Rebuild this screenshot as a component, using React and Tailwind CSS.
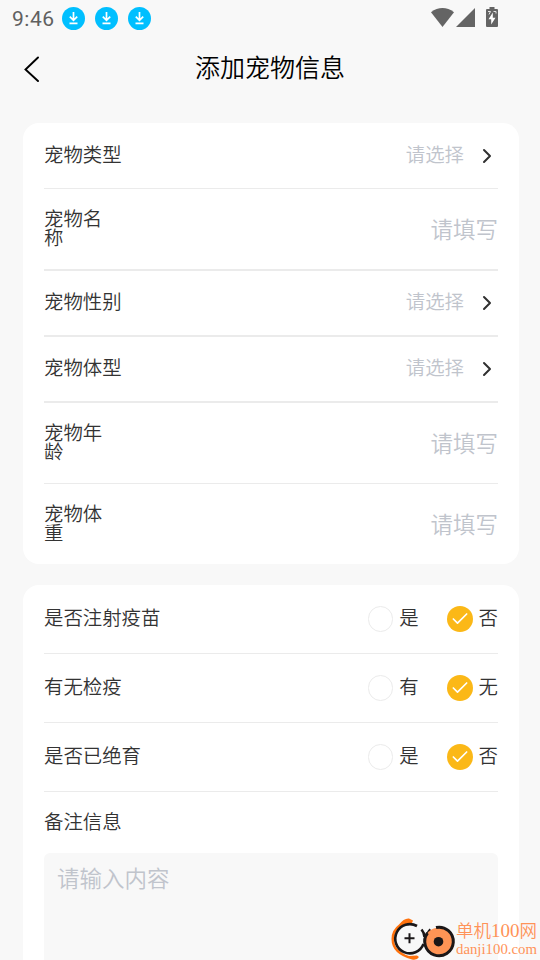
import { Check } from "lucide-react";

const petFields = [
  { label: "宠物类型", type: "select", size: "h-[66px] border-b" },
  { label: "宠物名称", type: "input", size: "h-[82px] border-b-2" },
  { label: "宠物性别", type: "select", size: "h-[66px] border-b-2" },
  { label: "宠物体型", type: "select", size: "h-[66px] border-b-2" },
  { label: "宠物年龄", type: "input", size: "h-[81px] border-b" },
  { label: "宠物体重", type: "input", size: "h-[80px]" },
];

const questions = [
  { label: "是否注射疫苗", yes: "是", no: "否" },
  { label: "有无检疫", yes: "有", no: "无" },
  { label: "是否已绝育", yes: "是", no: "否" },
];

function DownloadBadge() {
  return (
    <svg className="size-[23px]" viewBox="0 0 23 23" fill="none">
      <circle cx="11.5" cy="11.5" r="11.5" fill="#00bfff" />
      <path d="M11.5 5v8M7.8 9.7l3.7 3.7 3.7-3.7M7.5 16.4h8" stroke="#fff" strokeWidth="1.7" />
    </svg>
  );
}

function StatusBar() {
  return (
    <div className="flex h-9 items-center pl-3 pr-[42px]">
      <span className="w-[50px] pt-0.5 font-['Roboto',sans-serif] text-[21px] leading-none font-normal tracking-[0.5px] text-[#606060]">
        9:46
      </span>
      <div className="flex gap-[10px]">
        <DownloadBadge />
        <DownloadBadge />
        <DownloadBadge />
      </div>
      <svg className="ml-auto h-[22px] w-[67px]" viewBox="431 7 67 22" fill="#646464">
        <path d="M431 12.2C438.2 6.6 446.8 6.6 454 12.2L442.5 27z" />
        <path d="M475 8v19h-19z" />
        <path d="M489.5 7h5v2h2.5q1 0 1 1v16q0 1-1 1h-10q-1 0-1-1V10q0-1 1-1h2.5z" />
        <path d="M492.8 12.5l-4.3 6.7h2.7v5.3l4.3-6.8h-2.7z" fill="#fff" />
        <path d="M488 11.5h2.5l-1.5 3M493.5 11.5h2.5v2" stroke="#e4e4e4" strokeWidth="1" fill="none" />
      </svg>
    </div>
  );
}

function PetField({ label, type, size }) {
  return (
    <div className={`flex items-center justify-between border-[#ebebeb] ${size}`}>
      <span
        className={
          type === "input"
            ? "w-[62px] pb-1 leading-[19px] text-[#333]"
            : "pb-[5px] leading-[19px] text-[#333]"
        }
      >
        {label}
      </span>
      {type === "select" ? (
        <div className="flex items-center pr-[6px] pb-0.5 text-[#c0c4cc]">
          <span className="pb-[3px] leading-[19px]">请选择</span>
          <svg className="ml-[18px] mt-0.5 h-4 w-[10px]" viewBox="0 0 10 16" fill="none">
            <path d="M2 2l6 6-6 6" stroke="#303030" strokeWidth="2" strokeLinecap="round" strokeLinejoin="round" />
          </svg>
        </div>
      ) : (
        <span className="pb-[3px] text-[22.5px] leading-6 text-[#c0c4cc]">请填写</span>
      )}
    </div>
  );
}

function Question({ label, yes, no }) {
  return (
    <div className="flex h-[69px] items-center border-b border-[#ebebeb] text-[#333]">
      <span className="pb-[5px] leading-5">{label}</span>
      <div className="ml-auto flex items-center">
        <span className="h-[26px] w-[25px] rounded-full border-[1.5px] border-[#ebebeb]" />
        <span className="ml-[6px] pb-[5px] leading-5">{yes}</span>
        <span className="ml-7 flex size-[26px] items-center justify-center rounded-full bg-[#fbb817] text-white">
          <Check className="size-[20px]" strokeWidth={2} />
        </span>
        <span className="ml-[6px] pb-[5px] leading-5">{no}</span>
      </div>
    </div>
  );
}

function Watermark() {
  return (
    <div className="absolute bottom-0 right-[2px] flex h-[43px] items-center font-normal text-[#ff9358]">
      <svg className="h-[43px] w-[65px]" viewBox="0 0 65 43" fill="none">
        <path d="M8 7.5Q13 1 18 1.5l4 2-1 2.5-6 1Q3 12 3 22q0 12 15 17l8-.5 2 1.5q-2 3.5-7 2.5Q.5 37 .5 22 .5 13 8 7.5z" fill="#ff720d" />
        <path d="M26 9A14.6 14.6 0 1 0 32.500 27" stroke="#1b1718" strokeWidth="2.6" />
        <path d="M30.5 12.5Q33.500 16 33.500 20M36 20Q36 16 39.500 12.500" stroke="#1b1718" strokeWidth="2.6" />
        <circle cx="47.5" cy="24.7" r="14" fill="#ff9455" />
        <path d="M45 10.500A14.300 14.300 0 1 1 36.500 16" stroke="#1b1718" strokeWidth="3" />
        <circle cx="47.500" cy="24.700" r="4.800" fill="#1b1718" />
        <path d="M18.5 16.3v10m-5-5h10" stroke="#1b1718" strokeWidth="2" />
      </svg>
      <div className="w-[82px] whitespace-nowrap">
        <div className="text-[17.5px] leading-[21px] font-[350]">
          单机<span className="font-['Liberation_Serif',serif] text-[19px]">100</span>网
        </div>
        <div className="font-['Liberation_Serif',serif] text-[14.8px] leading-[17px]">danji100.com</div>
      </div>
    </div>
  );
}

export default function App() {
  return (
    <div className="relative h-[960px] w-[540px] overflow-hidden bg-[#f8f8f8] font-['Noto_Sans_CJK_SC',sans-serif] text-[19.4px] font-[350]">
      <StatusBar />

      {/* Page header */}
      <header className="grid h-[66px] grid-cols-[60px_1fr_60px] items-center">
        <button className="pl-6">
          <svg className="h-[26px] w-4" viewBox="0 0 16 26" fill="none">
            <path d="M14 1.5L1.5 13.5 14 25" stroke="#000" strokeWidth="1.9" strokeLinecap="round" />
          </svg>
        </button>
        <h1 className="pb-[7px] text-center text-[25px] leading-8 font-[350] text-black">添加宠物信息</h1>
      </header>

      <main className="flex flex-col gap-[21px] pl-[23px] pr-[21px] pt-[21px]">
        <section className="rounded-2xl bg-white px-[21px]">
          {petFields.map((field) => (
            <PetField key={field.label} {...field} />
          ))}
        </section>

        <section className="rounded-2xl bg-white px-[21px]">
          {questions.map((question) => (
            <Question key={question.label} {...question} />
          ))}
          <div className="flex h-[61px] items-center pb-[3px] text-[#333]">备注信息</div>
          <div className="h-[180px] rounded-md bg-[#f8f8f8] px-[13px] pt-2 text-[22.5px] leading-8 text-[#c0c4cc]">
            请输入内容
          </div>
        </section>
      </main>

      <Watermark />
    </div>
  );
}
